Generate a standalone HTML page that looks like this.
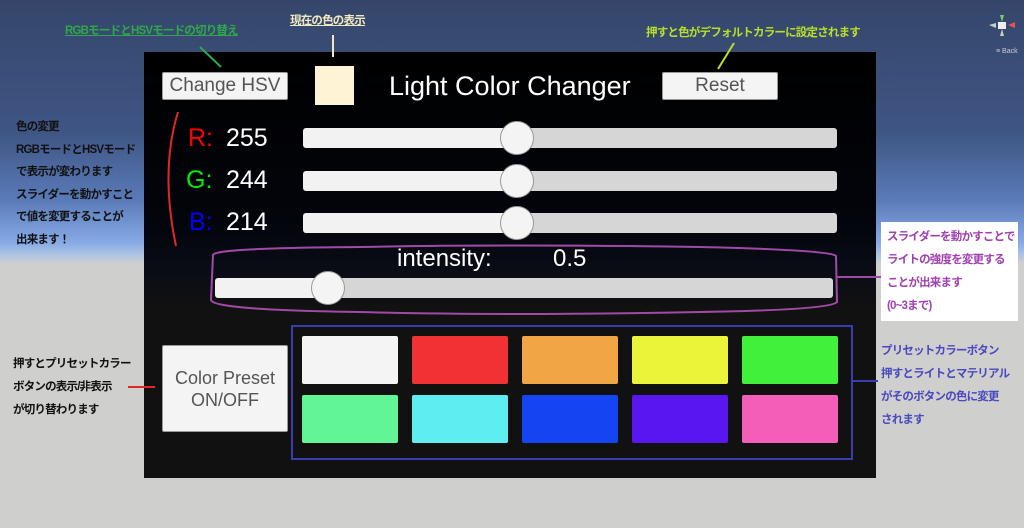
<!DOCTYPE html>
<html><head><meta charset="utf-8"><style>
*{margin:0;padding:0;box-sizing:border-box}
body{width:1024px;height:528px;overflow:hidden;position:relative;font-family:"Liberation Sans","Noto Sans CJK JP",sans-serif;
background:linear-gradient(to bottom,#35466a 0%,#3f5584 25%,#5a7bb8 38%,#87aae6 46%,#a9c2e4 48%,#cfcfcd 50%,#cfcfcd 100%);}
.a{position:absolute}
.panel{left:144px;top:52px;width:732px;height:426px;background:linear-gradient(to bottom,#000 0%,#03050c 40%,#0a0d16 52%,#111 60%,#111 100%)}
.btn{background:#f4f4f4;border:1px solid #999;color:#555;text-align:center;border-radius:2px}
.jp{font-family:"Liberation Sans","Noto Sans CJK JP",sans-serif;font-weight:bold;font-size:11.5px;letter-spacing:-0.8px;white-space:nowrap}
.lbl{font-size:25px;line-height:25px}
.track{height:20px;border-radius:3px;background:linear-gradient(to right,#f2f2f2 0,#f2f2f2 var(--p),#d6d6d6 var(--p))}
.knob{width:34px;height:34px;border-radius:50%;background:#f4f4f4;border:1px solid #999}
.sw{width:96px;height:48px;border-radius:2px}
</style></head><body>
<div class="a panel"></div>

<div class="a btn" style="left:162px;top:72px;width:126px;height:28px;font-size:19px;line-height:26px">Change HSV</div>
<div class="a" style="left:315px;top:66px;width:39px;height:39px;background:#fff3d6"></div>
<div class="a" style="left:389px;top:71px;color:#fff;font-size:27px;line-height:30px;white-space:nowrap">Light Color Changer</div>
<div class="a btn" style="left:662px;top:72px;width:116px;height:28px;font-size:19px;line-height:26px">Reset</div>

<div class="a lbl" style="left:188px;top:126px;color:#f00">R:</div>
<div class="a lbl" style="left:226px;top:126px;color:#fff">255</div>
<div class="a lbl" style="left:186px;top:168px;color:#0e0">G:</div>
<div class="a lbl" style="left:226px;top:168px;color:#fff">244</div>
<div class="a lbl" style="left:189px;top:210px;color:#00f">B:</div>
<div class="a lbl" style="left:226px;top:210px;color:#fff">214</div>

<div class="a track" style="--p:215px;left:303px;top:128px;width:534px"></div>
<div class="a track" style="--p:215px;left:303px;top:171px;width:534px"></div>
<div class="a track" style="--p:215px;left:303px;top:213px;width:534px"></div>
<div class="a knob" style="left:500px;top:121px"></div>
<div class="a knob" style="left:500px;top:164px"></div>
<div class="a knob" style="left:500px;top:206px"></div>

<div class="a" style="left:397px;top:245px;color:#fff;font-size:24px;line-height:28px">intensity:</div>
<div class="a" style="left:553px;top:245px;color:#fff;font-size:24px;line-height:28px">0.5</div>
<div class="a track" style="--p:113px;left:215px;top:278px;width:618px"></div>
<div class="a knob" style="left:311px;top:271px;width:34px;height:34px"></div>

<div class="a btn" style="left:162px;top:345px;width:126px;height:87px;font-size:18px;line-height:22px;padding-top:21px">Color Preset<br>ON/OFF</div>

<div class="a" style="left:291px;top:325px;width:562px;height:135px;border:2px solid #3a3cb0"></div>
<div class="a sw" style="left:302px;top:336px;background:#f4f4f4"></div>
<div class="a sw" style="left:412px;top:336px;background:#f23232"></div>
<div class="a sw" style="left:522px;top:336px;background:#f2a545"></div>
<div class="a sw" style="left:632px;top:336px;background:#ecf43a"></div>
<div class="a sw" style="left:742px;top:336px;background:#40f03a"></div>
<div class="a sw" style="left:302px;top:395px;background:#62f596"></div>
<div class="a sw" style="left:412px;top:395px;background:#5eeef2"></div>
<div class="a sw" style="left:522px;top:395px;background:#1545f3"></div>
<div class="a sw" style="left:632px;top:395px;background:#5a16f0"></div>
<div class="a sw" style="left:742px;top:395px;background:#f45eb8"></div>

<svg class="a" style="left:0;top:0" width="1024" height="528">
<path d="M178 112 Q160 170 176 246" stroke="#e02828" stroke-width="2" fill="none"/>
<path d="M213 255 Q213 248 360 247 Q500 244 700 247 Q830 250 836 256 L837 302 Q830 310 700 312 Q500 316 360 312 Q213 310 211 300 Z" stroke="#a04aa8" stroke-width="2" fill="none"/>
<line x1="837" y1="277" x2="881" y2="277" stroke="#a04aa8" stroke-width="2"/>
<line x1="853" y1="381" x2="878" y2="381" stroke="#3a3cb0" stroke-width="2"/>
<line x1="128" y1="387" x2="155" y2="387" stroke="#e02828" stroke-width="2"/>
<line x1="200" y1="47" x2="221" y2="67" stroke="#2ea84a" stroke-width="2"/>
<line x1="333" y1="35" x2="333" y2="57" stroke="#f0e8c0" stroke-width="2"/>
<line x1="734" y1="43" x2="718" y2="69" stroke="#b8e02a" stroke-width="2"/>
<polygon points="1000,15 1004,15 1002,22" fill="#7c7"/>
<polygon points="989,25 996,23 996,28" fill="#ccc"/>
<polygon points="1008,25 1015,22 1015,28" fill="#d55"/>
<polygon points="1000,36 1004,36 1002,29" fill="#ccc"/>
<rect x="998" y="22" width="8" height="7" fill="#eee"/>
</svg>
<div class="a" style="left:996px;top:48px;font-size:7px;color:#ccd">≡ Back</div>

<div class="a jp" style="left:65px;top:22px;color:#2ea84a;text-decoration:underline">RGBモードとHSVモードの切り替え</div>
<div class="a jp" style="left:290px;top:12px;color:#f0e8c0;text-decoration:underline">現在の色の表示</div>
<div class="a jp" style="left:646px;top:24px;color:#b8e02a">押すと色がデフォルトカラーに設定されます</div>

<div class="a jp" style="left:16px;top:116px;color:#111;line-height:22.6px">色の変更<br>RGBモードとHSVモード<br>で表示が変わります<br>スライダーを動かすこと<br>で値を変更することが<br>出来ます！</div>

<div class="a jp" style="left:13px;top:353px;color:#111;line-height:23px">押すとプリセットカラー<br>ボタンの表示/非表示<br>が切り替わります</div>

<div class="a jp" style="left:881px;top:222px;width:137px;height:99px;background:#fff;color:#a040b0;line-height:23px;padding:4px 0 0 6px">スライダーを動かすことで<br>ライトの強度を変更する<br>ことが出来ます<br>(0~3まで)</div>

<div class="a jp" style="left:881px;top:340px;color:#4a4ac0;line-height:23px">プリセットカラーボタン<br>押すとライトとマテリアル<br>がそのボタンの色に変更<br>されます</div>
</body></html>
